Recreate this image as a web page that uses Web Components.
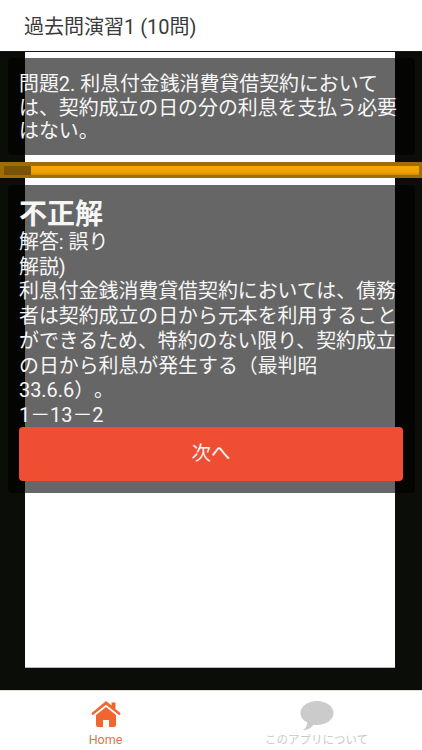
<!DOCTYPE html>
<html lang="ja"><head><meta charset="utf-8"><title>過去問演習1</title>
<style>html,body{margin:0;height:100%}body{font-family:Roboto,"Noto Sans CJK JP",sans-serif;overflow:hidden;text-spacing-trim:space-all}</style>
</head><body>
<quiz-app>
  <app-header slot="header">過去問演習1 (10問)</app-header>
  <dark-panel slot="question" style="--h:97px;--pt:15px;--lh:23.7px">問題2. 利息付金銭消費貸借契約においては、契約成立の日の分の利息を支払う必要はない。</dark-panel>
  <progress-strip slot="progress"></progress-strip>
  <dark-panel slot="answer" style="--h:308px;--pt:13px;--lh:24.7px">
    <strong style="display:block;font-size:28px;line-height:33px;font-weight:700">不正解</strong>
    解答: 誤り<br>解説)<br>利息付金銭消費貸借契約においては、債務者は契約成立の日から元本を利用することができるため、特約のない限り、契約成立の日から利息が発生する（最判昭33.6.6）。<br>1－13－2
    <next-button slot="footer">次へ</next-button>
  </dark-panel>
  <bottom-nav slot="nav"></bottom-nav>
</quiz-app>
<script>
function def(name, html){
  customElements.define(name, class extends HTMLElement{
    constructor(){super();this.attachShadow({mode:'open'}).innerHTML=html;}
  });
}
def('quiz-app',`<style>
:host{display:flex;flex-direction:column;width:422px;height:750px;background:#fff}
.stage{height:639px;background:#0b0d09;display:grid;grid-template:1fr/1fr;box-sizing:border-box;border-top:1px solid #1a1a1a}
.card{grid-area:1/1;margin:0 27px 22px 25px;background:#fff;border-bottom:1px solid #bbb}
.over{grid-area:1/1;display:flex;flex-direction:column;align-items:stretch}
.q{margin-top:6px}.p{margin-top:7px}.a{margin-top:7px}
</style>
<slot name="header"></slot>
<div class="stage"><div class="card"></div>
<div class="over"><div class="q"><slot name="question"></slot></div><div class="p"><slot name="progress"></slot></div><div class="a"><slot name="answer"></slot></div></div></div>
<slot name="nav"></slot>`);
def('app-header',`<style>
:host{display:flex;align-items:center;height:51px;box-sizing:border-box;padding:0 0 1px 24px;font-size:20px;color:#3a3a3a;background:#fff}
</style><slot></slot>`);
def('dark-panel',`<style>
:host{display:block;margin:0 7px 0 8px;height:var(--h);box-sizing:border-box;padding:var(--pt) 14px 0 11px;background:rgba(0,0,0,.6);border-radius:4px;color:#f6f6f6;font-size:19.9px;line-height:var(--lh);position:relative}
.f{position:absolute;left:11px;right:12px;bottom:12px}
</style><slot></slot><div class="f"><slot name="footer"></slot></div>`);
def('progress-strip',`<style>
:host{display:block;height:16px;box-sizing:border-box;background:linear-gradient(#f5a800,#f0a000 70%,#d08c00);border:4px solid #a06c08;border-width:4px 3px 3px 4px}
.fill{display:block;width:27px;height:100%;background:#7a5208}
</style><span class="fill"></span>`);
def('next-button',`<style>
:host{display:flex;align-items:center;justify-content:center;height:54px;background:#f04e32;color:#f6f6f6;border-radius:4px;font-size:19.5px}
</style><slot></slot>`);
def('bottom-nav',`<style>
:host{display:grid;grid-template-columns:1fr 1fr;height:60px;background:#fff;border-top:1px solid #ddd;box-sizing:border-box}
.t{display:flex;flex-direction:column;align-items:center;line-height:14px;padding-top:9px}
.t svg{display:block;height:32px;margin-bottom:1px}
.h{color:#e0754f;font-size:12.5px}.o{color:#c9c9c9;font-size:11.5px}
</style>
<div class="t h"><svg width="32" height="32" viewBox="0 0 32 32"><g transform="translate(1.500 0)"><path fill="#f26430" d="M14.500 1 20 5.500V2.500h4V9l4.500 3.700a1.200 1.200 0 0 1-1.600 1.900L14.500 4.700 2.100 14.600a1.200 1.200 0 0 1-1.600-1.900Z"/><path fill="#f26430" d="M14.500 7 24.500 15v10a2 2 0 0 1-2 2h-5v-7h-6v7h-5a2 2 0 0 1-2-2V15Z"/></g></svg>Home</div>
<div class="t o"><svg width="34" height="32" viewBox="0 0 34 32"><path fill="#cbcbcb" d="M17 1C26 1 33.500 6 33.500 13S26 25 17 25c-1.300 0-2.500-.1-3.700-.3C11.500 27.500 8.500 30 3 30c2.500-1.500 4-4 4.300-7.500C3 20.300.5 17 .5 13 .5 6 8 1 17 1Z"/></svg>このアプリについて</div>`);
</script>
</body></html>
